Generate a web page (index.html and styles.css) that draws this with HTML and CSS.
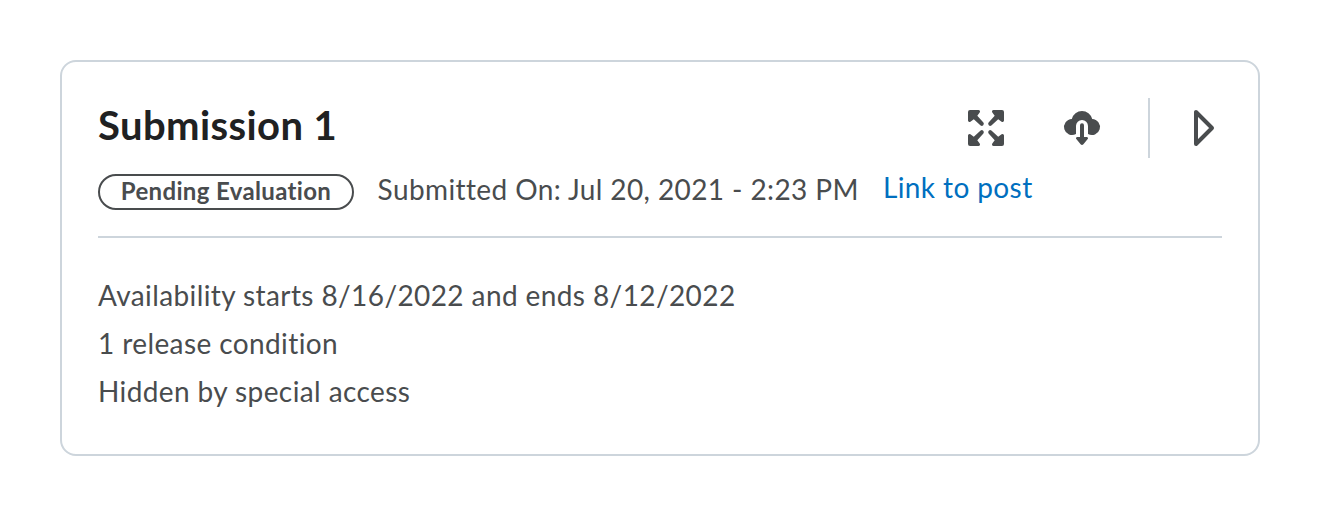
FILE: index.html
```
<!DOCTYPE html>
<html lang="en">
<head>
<meta charset="utf-8">
<title>Submission 1</title>
<link rel="stylesheet" href="styles.css">
</head>
<body>
<article class="card">
  <header class="header">
    <div class="title-row">
      <h1 class="title">Submission 1</h1>
      <div class="actions">
        <svg class="icon" viewBox="0 0 36 36" aria-label="Expand"><g fill="currentColor"><path d="M2 0h8.500a1.500 1.500 0 0 1 1.200 2.400L9.300 5.800 15.400 12.600a2 2 0 0 1-2.800 2.800L5.800 9.300 2.400 11.700A1.500 1.500 0 0 1 0 10.500V2a2 2 0 0 1 2-2z" id="c"/><use href="#c" transform="matrix(-1 0 0 1 36 0)"/><use href="#c" transform="matrix(1 0 0 -1 0 36)"/><use href="#c" transform="matrix(-1 0 0 -1 36 36)"/></g></svg>
        <svg class="icon" viewBox="0 0 36 36" aria-label="Download"><path d="M12 24A8 8 0 1 1 7.800 9.050A10.500 10.500 0 0 1 28.200 9.050A8 8 0 1 1 24 24V16a6 6 0 0 0-12 0z" fill="currentColor"/><path d="M18 15.200v14" stroke="currentColor" stroke-width="4" stroke-linecap="round"/><path d="M13.200 27h9.600a1.200 1.200 0 0 1 .9 2l-4.300 5.300a1.900 1.900 0 0 1-2.800 0L12.300 29a1.200 1.200 0 0 1 .9-2z" fill="currentColor"/></svg>
        <span class="divider"></span>
        <svg class="icon play" viewBox="0 0 36 36" aria-label="Open"><path d="M10 2v32L26 18z" fill="none" stroke="currentColor" stroke-width="4" stroke-linejoin="round"/></svg>
      </div>
    </div>
    <div class="meta">
      <span class="status">Pending Evaluation</span>
      <span class="date">Submitted On: Jul 20, 2021 - 2:23 PM</span>
      <a class="link">Link to post</a>
    </div>
  </header>
  <div class="details">
    <p>Availability starts 8/16/2022 and ends 8/12/2022</p>
    <p>1 release condition</p>
    <p>Hidden by special access</p>
  </div>
</article>
</body>
</html>
```
FILE: styles.css
```
* { box-sizing: border-box; }
body { margin: 0; padding: 60px; background: #fff; color: #494c4e; font-family: Lato, sans-serif; font-size: 28px; letter-spacing: 0.4px; }
.card { height: 396px; border: 2px solid #cdd5dc; border-radius: 16px; padding: 36px; }
.header { height: 140px; border-bottom: 2px solid #cdd5dc; }
.title-row { display: flex; justify-content: space-between; height: 60px; }
.title { margin: 0; color: #202122; font-size: 40px; line-height: 54px; font-weight: 700; letter-spacing: 0.4px; }
.actions { display: flex; align-items: center; color: #494c4e; }
.icon { width: 36px; height: 36px; margin-right: 60px; display: block; overflow: visible; }
.divider { width: 2px; height: 60px; background: #cdd5dc; margin: 0 36px 0 -12px; }
.play { margin-right: 0; }
.meta { display: flex; align-items: flex-start; padding-top: 16px; line-height: 30px; white-space: nowrap; }
.status { width: 256px; height: 36px; border: 2px solid #494c4e; border-radius: 18px; text-align: center; font-size: 24px; font-weight: 700; line-height: 29px; letter-spacing: 0.35px; margin-right: 23.600px; }
.date { margin-right: 24px; }
.link { color: #006fbf; margin-top: -2px; }
.details { padding-top: 33px; }
.details p { margin: 0; line-height: 48px; }
```
